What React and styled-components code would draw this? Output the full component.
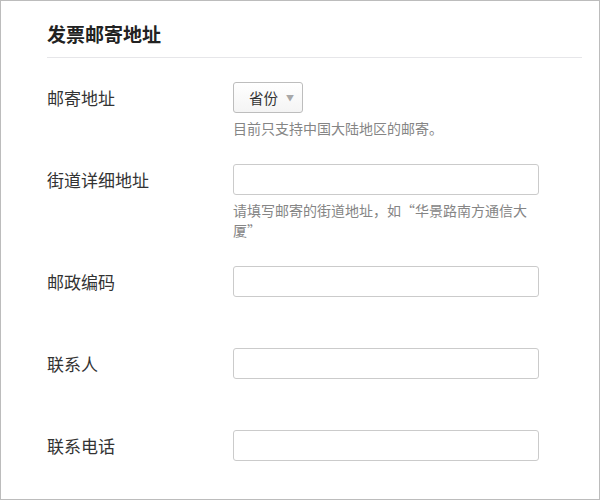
import React from 'react';
import styled, { createGlobalStyle } from 'styled-components';

const GlobalStyle = createGlobalStyle`
  html, body {
    margin: 0;
    padding: 0;
    background: #ffffff;
  }
  body {
    font-family: 'Noto Sans CJK SC', 'Noto Sans', sans-serif;
  }
`;

const Frame = styled.div`
  box-sizing: border-box;
  width: 600px;
  height: 500px;
  border: 1px solid #bcbcbc;
  padding: 0 17px 0 46px;
  overflow: hidden;
`;

const Header = styled.h2`
  margin: 0;
  padding: 19px 0 9px;
  font-size: 19px;
  line-height: 28px;
  font-weight: 700;
  color: #222;
  border-bottom: 1px solid #e6e6e9;
`;

const Form = styled.div`
  padding-top: 24px;
`;

const Row = styled.div`
  display: grid;
  grid-template-columns: 186px 306px;
  margin-bottom: 26px;
`;

const Label = styled.div`
  font-size: 17px;
  line-height: 31px;
  color: #333;
`;

const Field = styled.div`
  display: flex;
  flex-direction: column;
  align-items: flex-start;
`;

const Input = styled.input`
  box-sizing: border-box;
  width: 306px;
  height: 31px;
  margin: 0;
  padding: 0 8px;
  border: 1px solid #cbcbcb;
  border-radius: 3px;
  background: #fff;
  font: inherit;
  font-size: 14px;
  outline: none;
`;

const Select = styled.div`
  box-sizing: border-box;
  display: flex;
  align-items: center;
  gap: 8px;
  width: 70px;
  height: 31px;
  padding-left: 15px;
  border: 1px solid #bdbdbd;
  border-radius: 3px;
  background: linear-gradient(#ffffff, #f4f4f4);
  font-size: 14.5px;
  color: #333;
`;

const Caret = styled.span`
  font-size: 8px;
  color: #a8a8a8;
  line-height: 1;
`;

const Hint = styled.div`
  margin-top: 5px;
  min-height: 20px;
  width: 306px;
  font-size: 14px;
  line-height: 20px;
  color: #858585;
`;

const fields = [
  { label: '街道详细地址', hint: '请填写邮寄的街道地址，如“华景路南方通信大厦”' },
  { label: '邮政编码', hint: '' },
  { label: '联系人', hint: '' },
  { label: '联系电话', hint: '' },
];

export default function App() {
  return (
    <>
      <GlobalStyle />
      <Frame>
        <Header>发票邮寄地址</Header>
        <Form>
          <Row>
            <Label>邮寄地址</Label>
            <Field>
              <Select>
                省份<Caret>▼</Caret>
              </Select>
              <Hint>目前只支持中国大陆地区的邮寄。</Hint>
            </Field>
          </Row>
          {fields.map(f => (
            <Row key={f.label}>
              <Label>{f.label}</Label>
              <Field>
                <Input type="text" />
                <Hint>{f.hint}</Hint>
              </Field>
            </Row>
          ))}
        </Form>
      </Frame>
    </>
  );
}
